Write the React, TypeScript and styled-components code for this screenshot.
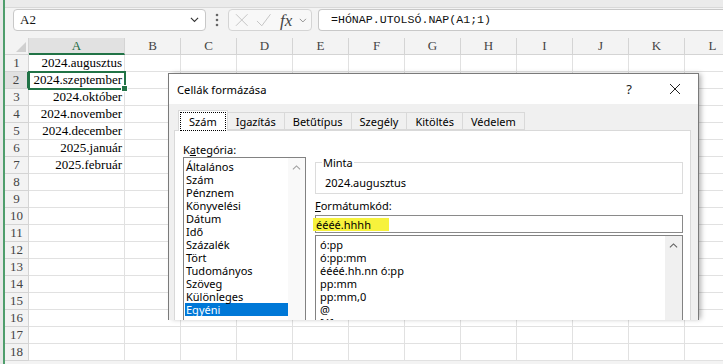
import React from "react";
import styled, { createGlobalStyle } from "styled-components";

const GlobalStyle = createGlobalStyle`
  html, body { margin: 0; padding: 0; }
  body { width: 723px; height: 364px; overflow: hidden; background: #ffffff; }
  #root { width: 723px; height: 364px; }
`;

const COLUMNS = ["A", "B", "C", "D", "E", "F", "G", "H", "I", "J", "K", "L"];
const ROW_COUNT = 18;
const VALUES: Record<number, string> = {
  1: "2024.augusztus",
  2: "2024.szeptember",
  3: "2024.október",
  4: "2024.november",
  5: "2024.december",
  6: "2025.január",
  7: "2025.február",
};

const TABS = ["Szám", "Igazítás", "Betűtípus", "Szegély", "Kitöltés", "Védelem"];
const CATEGORIES = [
  "Általános",
  "Szám",
  "Pénznem",
  "Könyvelési",
  "Dátum",
  "Idő",
  "Százalék",
  "Tört",
  "Tudományos",
  "Szöveg",
  "Különleges",
  "Egyéni",
];
const FORMATS = ["ó:pp", "ó:pp:mm", "éééé.hh.nn ó:pp", "pp:mm", "pp:mm,0", "@", "[ó]:pp:mm"];

const Chevron: React.FC<{ up?: boolean; color?: string; size?: number }> = ({ up, color = "#333", size = 9 }) => (
  <svg width={size} height={size * 0.6} viewBox="0 0 10 6">
    <polyline
      points={up ? "1,5 5,1 9,5" : "1,1 5,5 9,1"}
      fill="none"
      stroke={color}
      strokeWidth="1.2"
    />
  </svg>
);

const App: React.FC = () => {
  return (
    <Page>
      <GlobalStyle />
      <Edge />
      <Main>
        <TopStrip />
        <FormulaBar>
          <NameBox>
            <NameText>A2</NameText>
            <Chevron />
          </NameBox>
          <Dots>
            <svg width="4" height="14" viewBox="0 0 4 14">
              <circle cx="2" cy="2" r="1.3" fill="#666" />
              <circle cx="2" cy="7" r="1.3" fill="#666" />
              <circle cx="2" cy="12" r="1.3" fill="#666" />
            </svg>
          </Dots>
          <FuncBox>
            <svg width="14" height="14" viewBox="0 0 14 14">
              <path d="M1 1 L13 13 M13 1 L1 13" stroke="#c4c4c4" strokeWidth="1" fill="none" />
            </svg>
            <svg width="16" height="14" viewBox="0 0 16 14">
              <path d="M1 8 L6 13 L15 1" stroke="#c4c4c4" strokeWidth="1" fill="none" />
            </svg>
            <Fx>fx</Fx>
            <Chevron color="#8a8a8a" size={8} />
          </FuncBox>
          <FormulaInput>=HÓNAP.UTOLSÓ.NAP(A1;1)</FormulaInput>
        </FormulaBar>
        <Sheet>
          <Corner>
            <svg width="10" height="10" viewBox="0 0 10 10">
              <polygon points="10,0 10,10 0,10" fill="#d0d0d0" />
            </svg>
          </Corner>
          {COLUMNS.map((col) => (
            <ColHeader key={col} $active={col === "A"}>
              {col}
            </ColHeader>
          ))}
          {Array.from({ length: ROW_COUNT }, (_, i) => i + 1).map((row) => (
            <React.Fragment key={row}>
              <RowHeader $active={row === 2}>{row}</RowHeader>
              {COLUMNS.map((col) => (
                <Cell key={col} $selected={row === 2 && col === "A"}>
                  {col === "A" ? VALUES[row] ?? "" : ""}
                </Cell>
              ))}
            </React.Fragment>
          ))}
        </Sheet>
      </Main>

      <Dialog>
        <TitleBar>
          <Title>Cellák formázása</Title>
          <TitleButton>?</TitleButton>
          <TitleButton>
            <svg width="12" height="12" viewBox="0 0 12 12">
              <path d="M1 1 L11 11 M11 1 L1 11" stroke="#222" strokeWidth="1" fill="none" />
            </svg>
          </TitleButton>
        </TitleBar>
        <DialogBody>
          <TabRow>
            {TABS.map((tab, i) => (
              <Tab key={tab} $active={i === 0}>
                <TabLabel $focused={i === 0}>{tab}</TabLabel>
              </Tab>
            ))}
          </TabRow>
          <Panel>
            <LeftColumn>
              <Label>
                K<u>a</u>tegória:
              </Label>
              <ListBox>
                <ListItems>
                  {CATEGORIES.map((cat) => (
                    <ListItem key={cat} $selected={cat === "Egyéni"}>
                      {cat}
                    </ListItem>
                  ))}
                </ListItems>
                <ScrollTrack $light>
                  <Chevron up color="#a0a0a0" size={9} />
                </ScrollTrack>
              </ListBox>
            </LeftColumn>
            <RightColumn>
              <SampleGroup>
                <Legend>Minta</Legend>
                <SampleText>2024.augusztus</SampleText>
              </SampleGroup>
              <CodeLabel>
                <u>F</u>ormátumkód:
              </CodeLabel>
              <CodeInput>
                <Highlight>éééé.hhhh</Highlight>
              </CodeInput>
              <FormatList>
                <FormatItems>
                  {FORMATS.map((f) => (
                    <FormatItem key={f}>{f}</FormatItem>
                  ))}
                </FormatItems>
                <ScrollTrack>
                  <Chevron up color="#606060" size={9} />
                </ScrollTrack>
              </FormatList>
            </RightColumn>
          </Panel>
        </DialogBody>
      </Dialog>
    </Page>
  );
};

const Page = styled.div`
  position: relative;
  display: flex;
  width: 723px;
  height: 364px;
  overflow: hidden;
  background: #f3f3f3;
`;
const Edge = styled.div`
  width: 3px;
  flex: none;
  background: #e8e8e8;
  border-right: 2px solid #4f9e6c;
`;
const Main = styled.div`
  flex: 1;
  display: flex;
  flex-direction: column;
  min-width: 0;
  overflow: hidden;
`;
const TopStrip = styled.div`
  height: 7px;
  background: #ebebeb;
  border-bottom: 1px solid #d9d9d9;
`;
const FormulaBar = styled.div`
  height: 22px;
  display: flex;
  align-items: center;
  padding: 1px 0 7px 8px;
  background: #f3f3f3;
`;
const NameBox = styled.div`
  width: 193px;
  height: 22px;
  box-sizing: border-box;
  border: 1px solid #c8c8c8;
  border-radius: 4px;
  background: #fff;
  display: flex;
  align-items: center;
  justify-content: space-between;
  padding: 0 6px 0 6px;
  flex: none;
`;
const NameText = styled.span`
  font-family: "Liberation Serif", serif;
  font-size: 13px;
  color: #111;
`;
const Dots = styled.div`
  width: 22px;
  display: flex;
  justify-content: center;
  align-items: center;
  flex: none;
`;
const FuncBox = styled.div`
  width: 84px;
  height: 22px;
  box-sizing: border-box;
  border: 1px solid #d4d4d4;
  border-radius: 4px;
  background: #f8f8f8;
  display: flex;
  align-items: center;
  gap: 7px;
  padding: 0 4px 0 6px;
  flex: none;
`;
const Fx = styled.span`
  font-family: "Liberation Serif", serif;
  font-style: italic;
  font-size: 17px;
  color: #444;
  margin-left: 2px;
  line-height: 1;
`;
const FormulaInput = styled.div`
  margin-left: 6px;
  flex: 1;
  height: 22px;
  box-sizing: border-box;
  border: 1px solid #c8c8c8;
  border-right: none;
  border-radius: 4px 0 0 4px;
  background: #fff;
  font-family: "Liberation Mono", monospace;
  font-size: 11.6px;
  line-height: 20px;
  padding-left: 12px;
  color: #111;
  white-space: nowrap;
`;
const Sheet = styled.div`
  display: grid;
  grid-template-columns: 24px 96px repeat(11, 56px);
  grid-auto-rows: 17px;
  background: #fff;
`;
const Corner = styled.div`
  background: #f3f3f3;
  border-right: 1px solid #d4d4d4;
  border-bottom: 1px solid #d4d4d4;
  box-sizing: border-box;
  display: flex;
  align-items: flex-end;
  justify-content: flex-end;
  padding: 0 2px 2px 0;
`;
const ColHeader = styled.div<{ $active: boolean }>`
  box-sizing: border-box;
  background: ${(p) => (p.$active ? "#e1e1e1" : "#f3f3f3")};
  border-right: 1px solid #d4d4d4;
  border-bottom: ${(p) => (p.$active ? "2px solid #217346" : "1px solid #d4d4d4")};
  font-family: "Liberation Serif", serif;
  font-size: 13px;
  line-height: 16px;
  text-align: center;
  color: ${(p) => (p.$active ? "#1e6b41" : "#444")};
`;
const RowHeader = styled.div<{ $active: boolean }>`
  box-sizing: border-box;
  background: ${(p) => (p.$active ? "#e1e1e1" : "#f3f3f3")};
  border-right: ${(p) => (p.$active ? "2px solid #217346" : "1px solid #d4d4d4")};
  border-bottom: 1px solid #d4d4d4;
  font-family: "Liberation Serif", serif;
  font-size: 13px;
  line-height: 16px;
  text-align: center;
  color: #444;
`;
const Cell = styled.div<{ $selected: boolean }>`
  position: relative;
  box-sizing: border-box;
  border-right: 1px solid #e1e1e1;
  border-bottom: 1px solid #e1e1e1;
  font-family: "Liberation Serif", serif;
  font-size: 13px;
  line-height: 16px;
  text-align: right;
  padding-right: 2px;
  white-space: nowrap;
  color: #000;
  ${(p) =>
    p.$selected &&
    `
    outline: 2px solid #217346;
    outline-offset: -1px;
    z-index: 1;
    &::after {
      content: "";
      position: absolute;
      right: -4px;
      bottom: -4px;
      width: 5px;
      height: 5px;
      background: #217346;
      border: 1px solid #fff;
    }
  `}
`;

const Dialog = styled.div`
  position: absolute;
  left: 168px;
  top: 73px;
  width: 531px;
  height: 247px;
  box-sizing: border-box;
  border: 1px solid #7a7a7a;
  border-bottom: none;
  background: #f0f0f0;
  box-shadow: 3px 0 5px -1px rgba(0, 0, 0, 0.3);
  overflow: hidden;
  display: flex;
  flex-direction: column;
  font-family: "Noto Sans", "Open Sans", sans-serif;
  font-size: 11px;
  color: #000;
`;
const TitleBar = styled.div`
  height: 30px;
  flex: none;
  background: #fff;
  display: flex;
  align-items: center;
  padding-left: 8px;
`;
const Title = styled.span`
  flex: 1;
  font-size: 11.2px;
`;
const TitleButton = styled.div`
  width: 46px;
  height: 30px;
  display: flex;
  align-items: center;
  justify-content: center;
  font-size: 13px;
  color: #222;
`;
const DialogBody = styled.div`
  flex: 1;
  display: flex;
  flex-direction: column;
  padding: 6px 7px 0 5px;
`;
const TabRow = styled.div`
  display: flex;
  align-items: flex-end;
  height: 20px;
  padding-left: 4px;
`;
const Tab = styled.div<{ $active: boolean }>`
  height: ${(p) => (p.$active ? "21px" : "18px")};
  margin-bottom: ${(p) => (p.$active ? "-1px" : "0")};
  box-sizing: border-box;
  border: 1px solid #d9d9d9;
  border-bottom: ${(p) => (p.$active ? "none" : "1px solid #d9d9d9")};
  border-left: ${(p) => (p.$active ? "1px solid #d9d9d9" : "none")};
  background: ${(p) => (p.$active ? "#fff" : "#f0f0f0")};
  padding: ${(p) => (p.$active ? "1px 1px 0" : "0 8px")};
  display: flex;
  align-items: ${(p) => (p.$active ? "flex-start" : "center")};
  position: relative;
  z-index: ${(p) => (p.$active ? 1 : 0)};
`;
const TabLabel = styled.span<{ $focused: boolean }>`
  padding: 0 8px;
  line-height: 17px;
  border: 1px dotted ${(p) => (p.$focused ? "#000" : "transparent")};
  margin: ${(p) => (p.$focused ? "0" : "0 -9px")};
`;
const Panel = styled.div`
  flex: 1;
  background: #fff;
  border: 1px solid #d9d9d9;
  border-bottom: none;
  display: grid;
  grid-template-columns: 123px 1fr;
  column-gap: 9px;
  padding: 12px 7px 0 8px;
  min-height: 0;
`;
const LeftColumn = styled.div`
  display: flex;
  flex-direction: column;
  min-height: 0;
`;
const Label = styled.div`
  line-height: 13px;
  height: 13px;
  margin-bottom: 1px;
`;
const ListBox = styled.div`
  flex: 1;
  display: flex;
  border: 1px solid #828282;
  border-bottom: none;
`;
const ListItems = styled.div`
  flex: 1;
  padding: 2px 0 0 1px;
`;
const ListItem = styled.div<{ $selected: boolean }>`
  line-height: 13px;
  height: 13px;
  padding-left: 1px;
  white-space: nowrap;
  background: ${(p) => (p.$selected ? "#0078d7" : "transparent")};
  color: ${(p) => (p.$selected ? "#fff" : "#000")};
`;
const ScrollTrack = styled.div<{ $light?: boolean }>`
  width: 17px;
  flex: none;
  background: ${(p) => (p.$light ? "#f9f9f9" : "#f0f0f0")};
  display: flex;
  justify-content: center;
  padding-top: 7px;
  box-sizing: border-box;
`;
const RightColumn = styled.div`
  display: flex;
  flex-direction: column;
  padding-top: 13px;
  min-height: 0;
`;
const SampleGroup = styled.fieldset`
  margin: 0;
  padding: 0 6px 4px;
  border: 1px solid #dcdcdc;
  min-width: 0;
`;
const Legend = styled.legend`
  padding: 0 1px;
  line-height: 13px;
  font-size: 11px;
`;
const SampleText = styled.div`
  margin-top: 7px;
  margin-left: 3px;
  line-height: 13px;
`;
const CodeLabel = styled.div`
  margin-top: 5px;
  line-height: 13px;
`;
const CodeInput = styled.div`
  margin-top: 3px;
  height: 18px;
  box-sizing: border-box;
  border: 1px solid #8a8a8a;
  display: flex;
  align-items: center;
`;
const Highlight = styled.span`
  display: inline-block;
  background: #f7f23c;
  line-height: 13px;
  height: 13px;
  margin-left: -3px;
  padding: 0 18px 0 3px;
`;
const FormatList = styled.div`
  margin-top: 2px;
  flex: 1;
  display: flex;
  border: 1px solid #828282;
  border-bottom: none;
`;
const FormatItems = styled.div`
  flex: 1;
  padding: 2px 0 0 4px;
`;
const FormatItem = styled.div`
  line-height: 13px;
  height: 13px;
  white-space: nowrap;
`;

export default App;
